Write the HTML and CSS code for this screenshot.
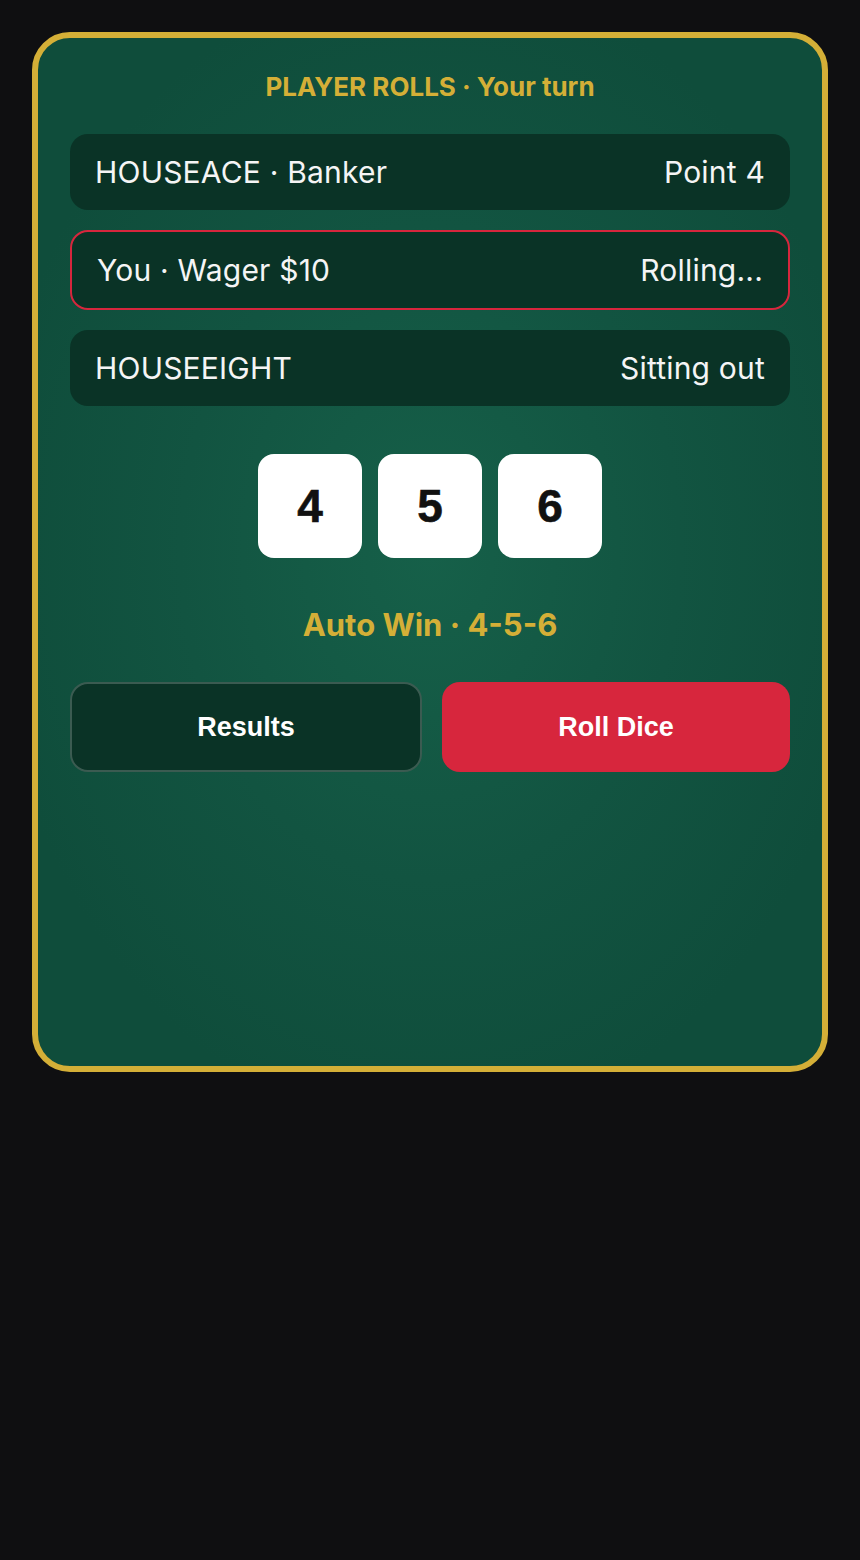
FILE: index.html
```html
<!DOCTYPE html>
<html lang="en">
<head>
<meta charset="utf-8">
<title>Player Rolls</title>
<link rel="stylesheet" href="styles.css">
</head>
<body>
<main class="table">
  <div class="status">PLAYER ROLLS · Your turn</div>
  <div class="seats">
    <div class="seat">
      <span>HOUSEACE · Banker</span>
      <span>Point 4</span>
    </div>
    <div class="seat seat-active">
      <span>You · Wager $10</span>
      <span>Rolling...</span>
    </div>
    <div class="seat">
      <span>HOUSEEIGHT</span>
      <span>Sitting out</span>
    </div>
  </div>
  <div class="dice">
    <div class="die">4</div>
    <div class="die">5</div>
    <div class="die">6</div>
  </div>
  <div class="outcome">Auto Win · 4-5-6</div>
  <div class="actions">
    <button class="btn btn-secondary">Results</button>
    <button class="btn btn-primary">Roll Dice</button>
  </div>
</main>
</body>
</html>
```
FILE: styles.css
```css
* { box-sizing: border-box; }
html, body { margin: 0; padding: 0; }
body {
  background: #0f0f11;
  font-family: Inter, "Noto Sans", sans-serif;
  padding: 32px;
  min-height: 1560px;
}
.table {
  height: 1040px;
  border: 6px solid #d4af37;
  border-radius: 38px;
  background: radial-gradient(ellipse at 50% 50%, #166049 0%, #125441 45%, #0f4d3b 80%);
  padding: 32px;
  display: flex;
  flex-direction: column;
}
.status {
  color: #d4af37;
  font-weight: 700;
  font-size: 26px;
  line-height: 34px;
  text-align: center;
  margin-bottom: 30px;
}
.seats {
  display: flex;
  flex-direction: column;
  gap: 20px;
}
.seat {
  display: flex;
  justify-content: space-between;
  align-items: center;
  background: #0a3326;
  border-radius: 18px;
  padding: 20px 25px;
  color: #f5f5f5;
  font-size: 30px;
  letter-spacing: 0.2px;
  line-height: 36px;
}
.seat-active {
  border: 2px solid #d7263d;
}
.dice {
  display: flex;
  justify-content: center;
  gap: 16px;
  margin-top: 48px;
}
.die {
  width: 104px;
  height: 104px;
  background: #ffffff;
  border-radius: 16px;
  display: flex;
  align-items: center;
  justify-content: center;
  color: #111111;
  font-family: "Liberation Sans", Arial, sans-serif;
  font-weight: 700;
  font-size: 46px;
  -webkit-text-stroke: 0.6px #111111;
}
.outcome {
  color: #d4af37;
  font-weight: 700;
  font-size: 31px;
  line-height: 36px;
  text-align: center;
  margin-top: 49px;
}
.actions {
  display: flex;
  gap: 20px;
  margin-top: 39px;
}
.btn {
  box-sizing: content-box;
  flex: 1 1 0;
  height: 90px;
  padding: 0;
  border-radius: 18px;
  font-family: "Liberation Sans", Arial, sans-serif;
  font-weight: 700;
  font-size: 27px;
  color: #ffffff;
  cursor: pointer;
}
.btn-secondary {
  background: #0a3326;
  border: 2px solid rgba(255, 255, 255, 0.2);
  height: 86px;
}
.btn-primary {
  background: #d7263d;
  border: none;
}
```
